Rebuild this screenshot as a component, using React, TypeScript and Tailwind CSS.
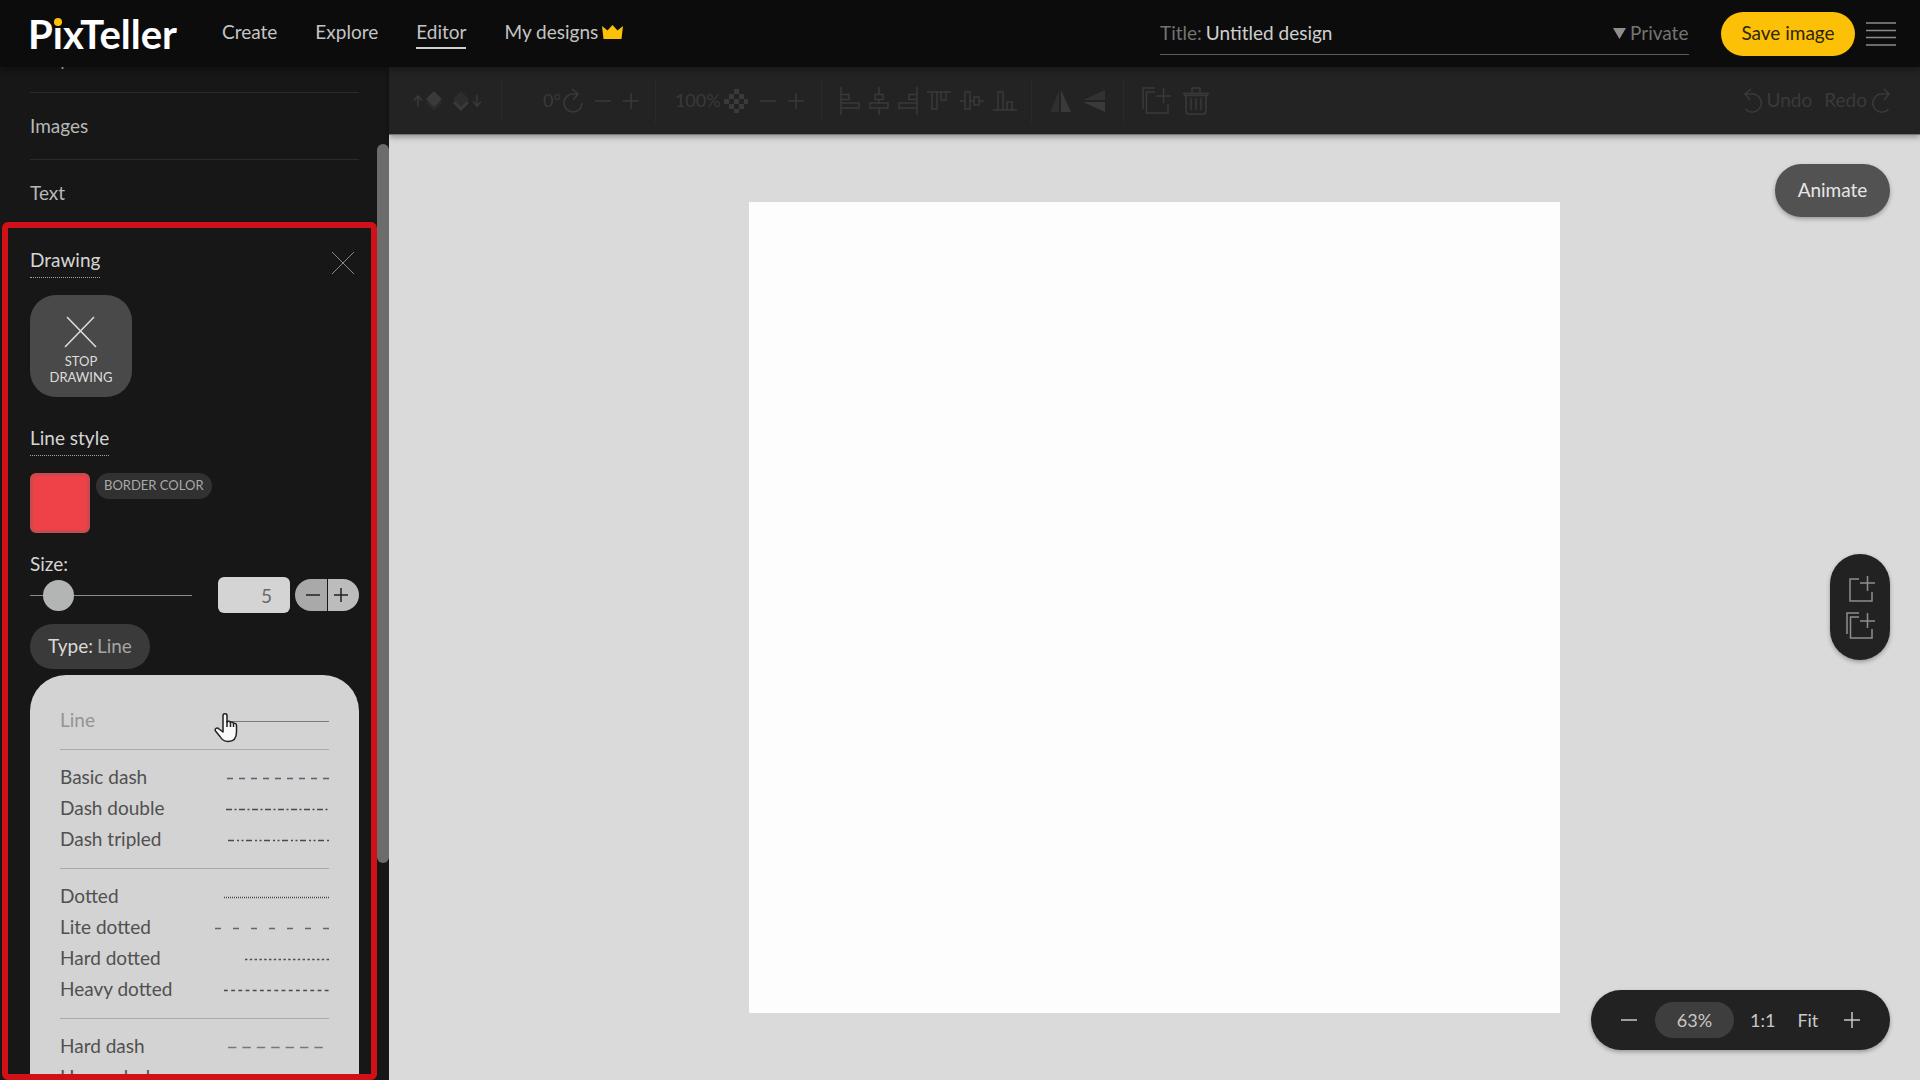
import { useState } from 'react'
import type { ReactNode } from 'react'

type LineType = {
  name: string
  width: number
  dash?: string
  stroke?: number
  color?: string
  inset?: number
}

const navItems = [
  { name: 'Create', href: '#create' },
  { name: 'Explore', href: '#explore' },
  { name: 'Editor', href: '#editor' },
  { name: 'My designs', href: '#designs' },
]

const lineGroups: LineType[][] = [
  [{ name: 'Line', width: 102, stroke: 1, color: '#7c7c7c' }],
  [
    { name: 'Basic dash', width: 102, dash: '6 6', color: '#56616f' },
    { name: 'Dash double', width: 103, dash: '6 2.5 2 2.5' },
    { name: 'Dash tripled', width: 101, dash: '6 3 2 2.5 2 2.5' },
  ],
  [
    { name: 'Dotted', width: 105, dash: '1 1' },
    { name: 'Lite dotted', width: 114, dash: '6 12', color: '#666666' },
    { name: 'Hard dotted', width: 84, dash: '2.4 2.4' },
    { name: 'Heavy dotted', width: 105, dash: '3.8 3.4' },
  ],
  [
    { name: 'Hard dash', width: 95, dash: '8.4 6', color: '#777777', inset: 6 },
    { name: 'Heavy dash', width: 95, dash: '10 6', color: '#777777', inset: 6 },
  ],
]

function Icon({ w, h, children }: { w: number; h: number; children: ReactNode }) {
  return (
    <svg width={w} height={h} viewBox={`0 0 ${w} ${h}`} fill="none" stroke="currentColor" strokeWidth="1.5" className="shrink-0">
      {children}
    </svg>
  )
}

const Minus = () => (
  <Icon w={16} h={16}>
    <path d="M0 8h16" />
  </Icon>
)

const Plus = () => (
  <Icon w={16} h={16}>
    <path d="M0 8h16M8 0v16" />
  </Icon>
)

const AddPage = () => (
  <Icon w={29} h={28}>
    <path d="M13 4H4v22h22v-9M14 8h15M21.500 1v15" />
  </Icon>
)

const CopyPage = () => (
  <Icon w={29} h={28}>
    <path d="M13 1H1v21M13 5H4.500v21H26v-9M14 9h15M21.500 1v15" />
  </Icon>
)

const Redo = () => (
  <Icon w={18} h={26}>
    <path d="M17 6H9.500A9 9 0 1 0 16.500 21M12 1l5 5-5 6" />
  </Icon>
)

const Undo = () => (
  <Icon w={18} h={26}>
    <path d="M1 6h7.500A9 9 0 1 1 1.500 21M7 1L1 6l5 6" />
  </Icon>
)

function ToolButton({ label, children }: { label: string; children: ReactNode }) {
  return (
    <button aria-label={label} className="flex items-center">
      {children}
    </button>
  )
}

function Header() {
  const [title, setTitle] = useState('Untitled design')

  return (
    <header className="relative z-20 flex h-[67px] shrink-0 items-center bg-[#0c0c0c] pr-6 pl-[28px] text-[19px] text-[#c4c4c4] shadow-[0_2px_8px_rgba(0,0,0,0.4)]">
      <a href="#home" className="w-[146px] text-[40px] leading-none font-bold text-white">
        P
        <span className="relative">
          i
          <span className="absolute top-[8px] left-px h-2 w-2 rounded-full bg-[#fcc006]" />
        </span>
        xTeller
      </a>

      <nav className="ml-12 flex items-center gap-[38px]">
        {navItems.map((item) => (
          <a
            key={item.href}
            href={item.href}
            className={`border-b-2 pt-[2px] pb-[3px] leading-6 ${item.name === 'Editor' ? 'border-[#d0d0d0]' : 'border-transparent'}`}
          >
            {item.name}
            {item.name === 'My designs' && (
              <svg width="21" height="14" viewBox="0 0 21 14" fill="#fcc006" className="ml-1 inline-block align-baseline">
                <path d="M0 1l5.500 4.500L10.500 0l5 5.500L21 1l-1.500 13h-18z" />
              </svg>
            )}
          </a>
        ))}
      </nav>

      <div className="ml-auto flex h-[43px] w-[529px] items-center border-b border-[#5c5c5c]">
        <label htmlFor="title" className="text-[#737373]">
          Title:
        </label>
        <input
          id="title"
          value={title}
          onChange={(e) => setTitle(e.target.value)}
          className="ml-1 min-w-0 flex-1 bg-transparent text-[#cfcfcf] outline-none"
        />
        <svg width="13" height="11" viewBox="0 0 13 11" fill="#8f8f8f">
          <path d="M0 0h13L6.500 11z" />
        </svg>
        <select aria-label="Visibility" className="ml-1 appearance-none bg-transparent text-[#737373]">
          <option>Private</option>
        </select>
      </div>

      <button className="ml-8 h-11 w-[134px] rounded-full bg-[#fcc006] text-[#2d2608]">Save image</button>
      <button aria-label="Menu" className="ml-[11px]">
        <Icon w={30} h={24}>
          <path d="M0 1h30M0 8.500h30M0 15.500h30M0 23h30" stroke="#8a8a8a" />
        </Icon>
      </button>
    </header>
  )
}

function Toolbar() {
  return (
    <div className="relative z-10 flex h-[68px] shrink-0 items-center border-b border-[#777777] bg-[#232323] text-[18px] text-[#3a3a3a] shadow-[0_2px_6px_rgba(0,0,0,0.35)]">
      <div className="flex h-11 items-center gap-[11px] border-r border-[#292929] pr-[19px] pl-6">
        <ToolButton label="Bring forward">
          <Icon w={29} h={20}>
            <path d="M5 16V5M1 9.500L5 5l4 4.500" />
            <path d="M21 4l8 8-8 8-8-8z" fill="#2b2b2b" stroke="none" />
            <path d="M21 0l8 8-8 8-8-8z" fill="currentColor" stroke="none" />
          </Icon>
        </ToolButton>
        <ToolButton label="Send backward">
          <Icon w={29} h={20}>
            <path d="M8 0l8 8-8 8-8-8z" fill="#2d2d2d" stroke="none" />
            <path d="M1 11l7 7 7-7" strokeWidth="3" />
            <path d="M24 4v11M20 10.500l4 4.500 4-4.500" />
          </Icon>
        </ToolButton>
      </div>

      <div className="flex h-11 items-center border-r border-[#292929] pr-4 pl-[41px]">
        <span>0°</span>
        <span className="ml-[2px] flex items-center gap-3">
          <ToolButton label="Rotate">
            <Icon w={20} h={26}>
              <path d="M15 6h-5A9 9 0 1 0 19 15M9 1l6 5-5 6" />
            </Icon>
          </ToolButton>
          <ToolButton label="Rotate left"><Minus /></ToolButton>
          <ToolButton label="Rotate right"><Plus /></ToolButton>
        </span>
      </div>

      <div className="flex h-11 items-center border-r border-[#292929] pr-[17px] pl-[19px]">
        <span>100%</span>
        <span className="ml-[3px] flex items-center gap-3">
          <ToolButton label="Opacity">
            <Icon w={24} h={24}>
              <path
                d="M10 0h5v5h-5zM5 5h5v5H5zM15 5h5v5h-5zM0 10h5v5H0zM10 10h5v5h-5zM20 10h4v5h-4zM5 15h5v5H5zM15 15h5v5h-5zM10 20h5v4h-5z"
                fill="currentColor"
                stroke="none"
              />
            </Icon>
          </ToolButton>
          <ToolButton label="Less opacity"><Minus /></ToolButton>
          <ToolButton label="More opacity"><Plus /></ToolButton>
        </span>
      </div>

      <div className="flex h-11 items-center gap-[9px] border-r border-[#292929] pr-[14px] pl-[18px]">
        <ToolButton label="Align left">
          <Icon w={20} h={28}>
            <path d="M1 0v28M1 7.500h8v5H1M1 16h18v5H1" />
          </Icon>
        </ToolButton>
        <ToolButton label="Align center">
          <Icon w={20} h={28}>
            <path d="M10 0v7M10 12.500V16M10 21v7M6 7.500h8v5H6zM1 16h18v5H1z" />
          </Icon>
        </ToolButton>
        <ToolButton label="Align right">
          <Icon w={20} h={28}>
            <path d="M19 0v28M19 7.500h-8v5h8M19 16H1v5h18" />
          </Icon>
        </ToolButton>
        <ToolButton label="Align top">
          <Icon w={24} h={20}>
            <path d="M0 1h24M5 1v17h5V1M14 1v8h5V1" />
          </Icon>
        </ToolButton>
        <ToolButton label="Align middle">
          <Icon w={24} h={20}>
            <path d="M0 10h5M10 10h4M19 10h5M5 1h5v17H5zM14 6h5v8h-5z" />
          </Icon>
        </ToolButton>
        <ToolButton label="Align bottom">
          <Icon w={24} h={20}>
            <path d="M0 19h24M5 19V1h5v18M14 19v-8h5v8" />
          </Icon>
        </ToolButton>
      </div>

      <div className="flex h-11 items-center gap-3 border-r border-[#292929] px-[18px]">
        <ToolButton label="Flip horizontal">
          <Icon w={21} h={22}>
            <path d="M9 1v21H0z" fill="#2f2f2f" stroke="none" />
            <path d="M11 0v22h10z" fill="currentColor" stroke="none" />
          </Icon>
        </ToolButton>
        <ToolButton label="Flip vertical">
          <Icon w={22} h={22}>
            <path d="M22 0v10H0z" fill="#323232" stroke="none" />
            <path d="M22 12v10L0 12z" fill="currentColor" stroke="none" />
          </Icon>
        </ToolButton>
      </div>

      <div className="flex items-center gap-3 pl-[18px]">
        <ToolButton label="Duplicate"><CopyPage /></ToolButton>
        <ToolButton label="Delete">
          <Icon w={26} h={28}>
            <path d="M0 6.500h26M1 8.500h24M9 6V1h8v5M3 9v15q0 3 3 3h14q3 0 3-3V9M8 11v12M13 11v12M18 11v12" />
          </Icon>
        </ToolButton>
      </div>

      <div className="ml-auto flex items-center gap-3 pr-[30px] text-[19px]">
        <button className="flex items-center gap-[5px]"><Undo />Undo</button>
        <button className="flex items-center gap-[5px]">Redo<Redo /></button>
      </div>
    </div>
  )
}

function Sidebar() {
  const [size, setSize] = useState(5)
  const [type, setType] = useState('Line')

  return (
    <aside className="relative w-[389px] shrink-0 overflow-hidden bg-[#171717] text-[19px] text-[#b8b8b8]">
      <div className="-mt-[41px] pr-[30px] pl-[30px]">
        <button className="flex h-[67px] w-[329px] items-center border-b border-[#2b2b2b]">Shapes</button>
        <button className="flex h-[67px] w-[329px] items-center border-b border-[#2b2b2b]">Images</button>
        <button className="flex h-[67px] w-[329px] items-center">Text</button>

        <div className="flex items-start justify-between pt-5 pr-1 text-[#d5d5d5]">
          <h2 className="border-b border-dotted border-[#a0a0a0] pb-1 leading-[26px]">Drawing</h2>
          <button aria-label="Close" className="mt-1 text-[#858585]">
            <Icon w={24} h={24}>
              <path d="M1 1l22 22M23 1L1 23" strokeWidth="1" />
            </Icon>
          </button>
        </div>

        <button className="mt-[17px] flex h-[102px] w-[102px] flex-col items-center rounded-[26px] bg-[#494949] pt-5 text-[13px] leading-4 text-[#dedede]">
          <Icon w={34} h={34}>
            <path d="M3 2l29 30M30 2L1 32" />
          </Icon>
          <span className="mt-1">STOP<br />DRAWING</span>
        </button>

        <h2 className="mt-7 inline-block border-b border-dotted border-[#a0a0a0] pb-1 align-top leading-[26px] text-[#d5d5d5]">Line style</h2>
        <div className="mt-[17px] flex items-start gap-[6px]">
          <button aria-label="Border color" className="h-[60px] w-[60px] rounded-md border-[3px] border-[#c94a4f] bg-[#ee4248]" />
          <span className="flex h-[26px] items-center rounded-full bg-[#313131] px-2 text-[13px] text-[#a9a9a9]">BORDER COLOR</span>
        </div>

        <label htmlFor="size" className="mt-[18px] block leading-[26px] text-[#d5d5d5]">Size:</label>
        <div className="flex h-9 items-center">
          <input
            id="size"
            type="range"
            min={0}
            max={52}
            value={size}
            onChange={(e) => setSize(Number(e.target.value))}
            className="h-8 w-[162px] appearance-none bg-transparent [&::-webkit-slider-runnable-track]:h-px [&::-webkit-slider-runnable-track]:bg-[#8c8c8c] [&::-webkit-slider-thumb]:-mt-[15px] [&::-webkit-slider-thumb]:h-[31px] [&::-webkit-slider-thumb]:w-[31px] [&::-webkit-slider-thumb]:appearance-none [&::-webkit-slider-thumb]:rounded-full [&::-webkit-slider-thumb]:bg-[#b3b5b4]"
          />
          <input
            aria-label="Size value"
            value={size}
            onChange={(e) => setSize(Number(e.target.value) || 0)}
            className="ml-[26px] h-9 w-[72px] rounded-md bg-[#d4d4d4] pr-[18px] text-right text-[#6a6a6a]"
          />
          <div className="ml-[5px] flex h-8 w-16 gap-px overflow-hidden rounded-full text-[#222222]">
            <button aria-label="Decrease" onClick={() => setSize(size - 1)} className="flex flex-1 items-center justify-center bg-[#a9a9a9] pl-1">
              <Icon w={14} h={14}><path d="M0 7h14" /></Icon>
            </button>
            <button aria-label="Increase" onClick={() => setSize(size + 1)} className="flex flex-1 items-center justify-center bg-[#bcbcbc] pr-1">
              <Icon w={14} h={14}><path d="M0 7h14M7 0v14" /></Icon>
            </button>
          </div>
        </div>

        <button className="mt-[11px] flex h-[45px] w-[120px] items-center justify-center gap-1 rounded-full bg-[#3a3a3a] text-[#dadada]">
          Type: <span className="text-[#a5a5a5]">{type}</span>
        </button>

        <div className="mt-[6px] w-[329px] rounded-t-[36px] bg-[#d3d3d3] px-[30px] pt-[18px] pb-8 text-[#505050]">
          {lineGroups.map((group, i) => (
            <ul key={i} className="border-b border-[#aaaaaa] pt-3 pb-[13px] last:border-b-0">
              {group.map((line) => (
                <li key={line.name}>
                  <button
                    onClick={() => setType(line.name)}
                    className={`flex h-[31px] w-full items-center justify-between ${line.name === type ? 'text-[#949494]' : ''}`}
                  >
                    {line.name}
                    <svg width={line.width + (line.inset ?? 0)} height="3" className="mt-[2px]">
                      <line
                        x1="0"
                        x2={line.width}
                        y1="1.500"
                        y2="1.500"
                        stroke={line.color ?? '#4a4a4a'}
                        strokeWidth={line.stroke ?? 1.5}
                        strokeDasharray={line.dash}
                      />
                    </svg>
                  </button>
                </li>
              ))}
            </ul>
          ))}
        </div>
      </div>

      {/* scrollbar */}
      <div className="absolute top-[77px] right-0 h-[71%] w-3 rounded-full bg-[#6c6c6c]" />

      {/* highlighted section */}
      <div className="pointer-events-none absolute top-[155px] right-3 bottom-0 left-[2px] rounded-md border-[6px] border-[#d01117]" />

      {/* pointer */}
      <svg width="24" height="30" viewBox="0 0 24 30" className="absolute top-[646px] left-[214px]">
        <path
          d="M9 2.500c0-2.300 4-2.300 4 0V9c1-1.200 3-1 3.500.5 1.200-.8 2.800-.3 3 1 1.500-.6 3 .2 3 2V19c0 6-3 9.500-8.500 9.500-4 0-6-1.500-8-5L1.500 18c-1.200-2.400 1.500-4 3.500-2l4 3z"
          fill="#fafafa"
          stroke="#222222"
          strokeWidth="1.500"
          strokeLinejoin="round"
        />
        <path d="M13 8v6M16.500 9.500V14M19.500 10.500V14" stroke="#222222" strokeWidth="1.500" />
      </svg>
    </aside>
  )
}

export default function App() {
  return (
    <div className="flex h-screen flex-col overflow-hidden font-[Lato,'Open_Sans',sans-serif]">
      <Header />
      <div className="flex min-h-0 flex-1">
        <Sidebar />
        <main className="relative flex min-w-0 flex-1 flex-col bg-[#dadada] text-[19px]">
          <Toolbar />
          <div className="flex min-h-0 flex-1 items-center justify-center py-[67px]">
            <div className="aspect-square h-full bg-[#fdfdfd]" />
          </div>

          <button className="absolute top-[97px] right-[30px] h-[53px] w-[115px] rounded-full bg-[#525252] text-[#e6e6e6] shadow-[0_2px_4px_rgba(0,0,0,0.3)]">
            Animate
          </button>

          <div className="absolute top-[487px] right-[30px] flex h-[106px] w-[60px] flex-col items-center justify-center gap-[9px] rounded-full bg-[#222222] text-[#8e8e8e] shadow-[0_2px_4px_rgba(0,0,0,0.3)]">
            <ToolButton label="Add page"><AddPage /></ToolButton>
            <ToolButton label="Duplicate page"><CopyPage /></ToolButton>
          </div>

          <div className="absolute right-[30px] bottom-[30px] flex h-[60px] w-[299px] items-center rounded-full bg-[#222222] px-[30px] text-[18px] text-[#c8c8c8] shadow-[0_2px_4px_rgba(0,0,0,0.3)]">
            <ToolButton label="Zoom out"><Minus /></ToolButton>
            <button className="mr-4 ml-[18px] h-9 w-[79px] rounded-full bg-[#3e3e3e]">63%</button>
            <button>1:1</button>
            <button className="mr-auto ml-[22px]">Fit</button>
            <ToolButton label="Zoom in"><Plus /></ToolButton>
          </div>
        </main>
      </div>
    </div>
  )
}
